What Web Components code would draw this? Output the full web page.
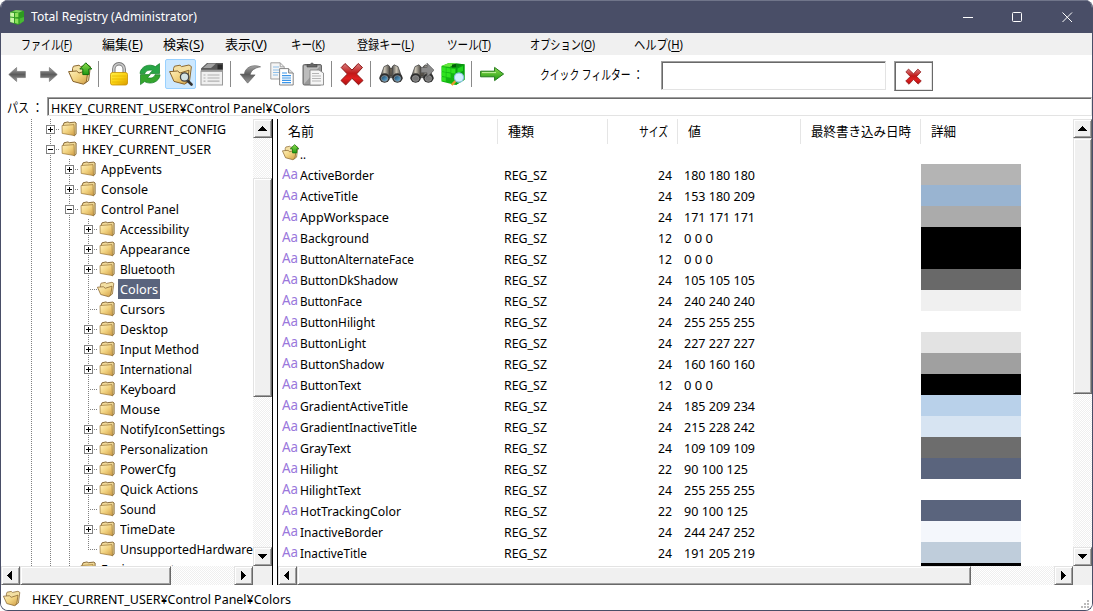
<!DOCTYPE html>
<html lang="ja">
<head>
<meta charset="utf-8">
<title>Total Registry (Administrator)</title>
<style>
  html, body { margin: 0; height: 100%; overflow: hidden; background: #fff; }
  body { font: 13px/20px "Noto Sans", "Noto Sans CJK JP", sans-serif; color: #000; }
</style>
</head>
<body>
<registry-app></registry-app>

<script>
// Icons, keyed by name: [viewBox size, markup]
const GRADS = `
  <defs>
    <linearGradient id="gray" x2="0" y2="1"><stop stop-color="#a5a5a5"/><stop offset=".5" stop-color="#5c5c5c"/><stop offset="1" stop-color="#9a9a9a"/></linearGradient>
    <linearGradient id="fold" x2="1" y2="1"><stop stop-color="#fff1bf"/><stop offset=".5" stop-color="#f1d27f"/><stop offset="1" stop-color="#cf9c45"/></linearGradient>
    <linearGradient id="green" x2="0" y2="1"><stop stop-color="#8fdc4e"/><stop offset="1" stop-color="#1f9a12"/></linearGradient>
    <linearGradient id="gold" x2="1" y2="1"><stop stop-color="#fff04a"/><stop offset=".5" stop-color="#fbd313"/><stop offset="1" stop-color="#d99a00"/></linearGradient>
    <linearGradient id="red" x2="0" y2="1"><stop stop-color="#d98080"/><stop offset=".45" stop-color="#c01818"/><stop offset=".7" stop-color="#e02020"/><stop offset="1" stop-color="#a80d0d"/></linearGradient>
    <linearGradient id="lens" x2="1" y2="1"><stop stop-color="#16405f"/><stop offset="1" stop-color="#6cb8e6"/></linearGradient>
    <linearGradient id="barrel" x2="1" y2="0"><stop stop-color="#3c3c3c"/><stop offset=".45" stop-color="#c9c3b4"/><stop offset="1" stop-color="#3a3733"/></linearGradient>
  </defs>`;
const OPEN_FOLDER = `
  <path d="M4.5 10V6.5l1-2.3 5.5-1 1.5 1.4 7.5-1.6 2.4 1.6-1.8 14-4 3z" fill="#f3dfa2" stroke="#8c6a34" stroke-width="1"/>
  <path d="M.6 9.6l8-.6 2.4 2 9-2.8-1.6 11.4-3 2.6L5 19.4z" fill="url(#fold)" stroke="#86622c" stroke-width="1" stroke-linejoin="round"/>`;
const X_MARK = `<path d="M5 1.5l7 6.6 6.2-6.6 4.3 4-6 6.5 6.5 6.5-4.5 4.2-6.5-6.4-6.3 6.7L1 18.5 7.4 12 1.2 5.6z" fill="url(#red)" stroke="#8e1515" stroke-width="1" stroke-linejoin="round"/>`;
const BINOCULARS = lens => `
  <path d="M9 6.5h6V14H9z" fill="#8d7f68" stroke="#3b342a" stroke-width=".7"/>
  <path d="M5 4.6l4-1.8 2 2.2.4 11L.8 16.5z" fill="url(#barrel)" stroke="#3a3a3a" stroke-width=".7"/>
  <path d="M19 4.6l-4-1.8L13 5l-.4 11 10.6.5z" fill="url(#barrel)" stroke="#3a3a3a" stroke-width=".7"/>
  <ellipse cx="5.6" cy="16" rx="5.2" ry="4.7" fill="#2e2e2e"/><ellipse cx="18.4" cy="16" rx="5.2" ry="4.7" fill="#2e2e2e"/>
  <ellipse cx="5.6" cy="16.5" rx="3.3" ry="2.9" fill="${lens}" stroke="#999" stroke-width=".7"/>
  <ellipse cx="18.4" cy="16.5" rx="3.3" ry="2.9" fill="${lens}" stroke="#999" stroke-width=".7"/>`;
const ICONS = {
  app: [16, `<path d="M1 3l6-2 8 1v10l-6 4-8-3z" fill="#2f9a22"/>
    <path d="M1.2 3.5L5 4v4L1.2 7.5zM1.2 8.5L5 9v5l-3.8-1z" fill="#c9f5a8"/>
    <path d="M6 4l3.6-.6V8L6 8.2zM6 9.4l3.6.4V15L6 14z" fill="#8be05a"/>
    <path d="M9.6 3.8L15 2.4v9.4L9.6 15.4z" fill="#2d9a20"/><path d="M10.6 9.4L15 8v4l-4.4 3z" fill="#48b934"/>
    <path d="M3 2.6L7 1l7 .8-4 1.6z" fill="#7fd060"/>`],
  back: [24, `<path d="M2 12l9-8v4.5h10v7H11V20z" fill="url(#gray)" stroke="#777" stroke-width=".8"/>`],
  forward: [24, `<path d="M22 12l-9-8v4.5H3v7h10V20z" fill="url(#gray)" stroke="#777" stroke-width=".8"/>`],
  up: [24, OPEN_FOLDER + `<path d="M17.8.8l6 6.2h-3v5.6h-6V7h-3z" fill="url(#green)" stroke="#0d6e0a" stroke-width="1"/>`],
  lock: [24, `<path d="M6.8 11V7a5.2 5.2 0 0 1 10.4 0v4" fill="none" stroke="#777" stroke-width="3.4"/>
    <path d="M6.8 11V7a5.2 5.2 0 0 1 10.4 0v4" fill="none" stroke="#ccc" stroke-width="1.6"/>
    <rect x="3.5" y="10.5" width="17" height="12.5" rx="2" fill="url(#gold)" stroke="#c79200" stroke-width=".8"/>
    <path d="M5 14h14M5 17h14M5 20h14" stroke="#e6b800" stroke-width=".8"/>`],
  refresh: [24, `<path d="M2 11.5C2.5 4.5 11 1 17.4 4.6L21.5 1.6v10H11.6l3-3C11.5 7.4 7.6 8.5 7 11.5z" fill="#28a545" stroke="#0f7c22" stroke-width=".7"/>
    <path d="M22 12.8C21.500 19.800 13 23.200 6.600 19.600L2.500 22.600v-10h9.900l-3 3c3.100 1.200 7 .1 7.600-2.900z" fill="#35a52d" stroke="#0f7c22" stroke-width=".7"/>`],
  search: [24, OPEN_FOLDER + `<path d="M18.500 18.500l4 4" stroke="#333" stroke-width="2.600" stroke-linecap="round"/>
    <circle cx="15.600" cy="15" r="4.200" fill="#cfe6f7" fill-opacity=".85" stroke="#444" stroke-width="1.300"/>`],
  history: [24, `<path d="M1 6.500L7 1h16v8H1z" fill="#5a5a5a"/><path d="M8 1.500h8L11 6H3z" fill="#a3a3a3"/><path d="M17.500 2.500h5v5h-5z" fill="#2c2c2c"/>
    <rect x="1" y="9" width="21.500" height="14" fill="#f0f0f0" stroke="#999"/>
    <path d="M1 8.800h22" stroke="#999" stroke-width="2"/>
    <path d="M3.500 13h2m2 0h12M3.500 16h2m2 0h12M3.500 19.200h2m2 0h12" stroke="#b0b0b0" stroke-width="1.200"/>`],
  undo: [24, `<path d="M22.500 4C15 .9 6.400 4 5.600 11.600H1.200L9 21l7.800-8.600h-5C12 8 16.500 5 22.500 4z" fill="url(#gray)" stroke="#666" stroke-width=".7"/>`],
  copy: [24, `<path d="M.8.8h9.400l4 4V17H.8z" fill="#f5f5f5" stroke="#999" stroke-width=".9"/><path d="M10.200.8v4h4" fill="none" stroke="#999" stroke-width=".9"/>
    <path d="M3 5h6M3 8h6M3 10.500h6M3 13h5" stroke="#8ec0ea" stroke-width="1.100"/>
    <path d="M9.600 6.600h9l4.600 4.400v12H9.600z" fill="#fff" stroke="#777" stroke-width=".9"/><path d="M18.600 6.600V11h4.600" fill="#ddd" stroke="#777" stroke-width=".9"/>
    <path d="M12 11h5M12 13.600h9M12 16h9M12 18.400h9M12 20.600h9" stroke="#3b95e8" stroke-width="1.200"/>`],
  paste: [24, `<rect x="2" y="2.500" width="18.500" height="20.500" rx="1.500" fill="#9a9a9a" stroke="#666"/>
    <path d="M3 4h16L3 22z" fill="#bcbcbc"/><path d="M6 5V2.500h3Q11-.6 13 2.500h3V5z" fill="#666" stroke="#444" stroke-width=".6"/>
    <path d="M9 8h9l4.500 3v12H9z" fill="#f6f6f6" stroke="#888" stroke-width=".9"/>
    <path d="M11 11.500h7M11 14h9M11 16.500h9M11 19h9" stroke="#b5b5b5"/>`],
  del: [24, X_MARK],
  find: [24, BINOCULARS('url(#lens)')],
  findNext: [24, BINOCULARS('#777') + `<path d="M11 5.400h6V1.200l7 7-7 7v-4.400h-6z" fill="#8b8b8b" stroke="#555" stroke-width=".7"/>`],
  cube: [24, `<path d="M.5 4L8 1l15.500 1.200v15.500L14.500 23 .5 19.500z" fill="#12b512"/>
    <path d="M.5 4L8 1l7 .6L9 5z" fill="#66e83e"/><path d="M9 5l6-3.400 8.500.6L15 6z" fill="#0a8f10"/>
    <path d="M15 6l8.500-3.800v15.500L15 23z" fill="#08a010"/><path d="M16.500 6.500L22 4v5l-5.500 2z" fill="#1fd51c"/><path d="M11 2.500l4-.6v3l-4 .6z" fill="#055c08"/>
    <path d="M.8 5l4 .6v4.300l-4-.6zM5.400 5.800l4.200.6v4.200l-4.200-.7zM.8 10l4 .6v4.200l-4-.8zM5.400 10.800l4.200.7v4.200l-4.200-.8zM.8 14.900l4 .7v4l-4-1zM10.200 6.600l4 .4v4.600l-4-.6z" fill="#2fe31f"/>
    <path d="M14.500 19l-3.800 4" stroke="#e89b30" stroke-width="2.400"/><circle cx="18" cy="15.500" r="4.600" fill="#d3efff" stroke="#86c3dc" stroke-width="1.100"/>`],
  go: [24, `<path d="M.6 9.200h14V5.400l9 6.600-9 6.600v-3.800H.6z" fill="url(#green)" stroke="#227a1a" stroke-width="1" stroke-linejoin="round"/><path d="M2 10.600h14" stroke="#c5f2a0" stroke-width="1"/>`],
  folder: [16, `<path d="M2 4.500l1-2.700 4-.9 1.200.8 5.600-.6 1.300.9V13l-1.600 1.800z" fill="#f0d998" stroke="#7d5f2e" stroke-width=".9" stroke-linejoin="round"/>
    <path d="M1 4.600l12-1 .5 11L1.200 12.400z" fill="url(#fold)" stroke="#9a7536" stroke-width=".7"/>`],
  open: [24, OPEN_FOLDER],
};
// the <defs> come along with each icon because ids resolve per shadow root
const icon = (name, size) => {
  const [box, body] = ICONS[name];
  return `<svg width="${size}" height="${size}" viewBox="0 0 ${box} ${box}">${GRADS}${body}</svg>`;
};

// Base class: shadow root filled from css() and html()
class UiElement extends HTMLElement {
  connectedCallback() {
    if (this.shadowRoot) return;
    this.attachShadow({ mode: 'open' });
    this.shadowRoot.innerHTML = `<style>${this.css()}</style>${this.html()}`;
    this.ready();
  }
  ready() {}
}

// <ui-text w="60"> — one line of text condensed or widened to w pixels
class UiText extends UiElement {
  css() {
    return `
      :host { display: inline-block; white-space: nowrap; }
      span { display: inline-block; transform-origin: 0 50%; }
    `;
  }
  html() { return '<span><slot></slot></span>'; }
  ready() {
    const w = Number(this.getAttribute('w'));
    const span = this.shadowRoot.querySelector('span');
    const natural = span.getBoundingClientRect().width;
    if (!w || !natural) return;
    this.style.width = w + 'px';
    span.style.transform = `scaleX(${w / natural})`;
  }
}
customElements.define('ui-text', UiText);

// Icon element
class UiIcon extends UiElement {
  css() { return ':host { display: block; flex: none; } svg { display: block; }'; }
  html() { return icon(this.getAttribute('name'), this.getAttribute('size') || 16); }
}
customElements.define('ui-icon', UiIcon);

// Classic scroll bar: before = hatch before the thumb, thumb = its length
class ClassicScroll extends UiElement {
  css() {
    return `
      :host {
        display: flex; flex-direction: column; width: 19px;
        background: repeating-conic-gradient(#efefef 0 25%, #fff 0 50%) 0 0 / 2px 2px;
      }
      :host([horizontal]) { flex-direction: row; width: auto; height: 19px; }
      div {
        box-sizing: border-box; flex: none; background: #f0f0f0;
        border: 1px solid; border-color: #e3e3e3 #696969 #696969 #e3e3e3;
        box-shadow: inset 1px 1px #fff, inset -1px -1px #a0a0a0;
      }
      .btn { width: 19px; height: 19px; display: flex; align-items: center; justify-content: center; }
      .gap { flex: none; background: none; border: 0; box-shadow: none; }
      .rest { flex: 1; background: none; border: 0; box-shadow: none; }
    `;
  }
  html() {
    const h = this.hasAttribute('horizontal');
    const side = h ? 'width' : 'height';
    const a = h ? 'M6 0v9L1 4.5z' : 'M0 7h9L4.5 2z';
    const b = h ? 'M2 0v9l5-4.5z' : 'M0 2h9L4.5 7z';
    const svg = d => `<svg width="9" height="9" shape-rendering="crispEdges"><path d="${d}"/></svg>`;
    return `
      <div class="btn">${svg(a)}</div>
      <div class="gap" style="${side}:${this.getAttribute('before') || 0}px"></div>
      <div style="${side}:${this.getAttribute('thumb')}px"></div>
      <div class="rest"></div>
      <div class="btn">${svg(b)}</div>
    `;
  }
}
customElements.define('classic-scroll', ClassicScroll);

class TitleBar extends UiElement {
  css() {
    return `
      :host {
        display: flex; align-items: center; height: 32px; padding: 0 19px 0 8px;
        background: #494e67; color: #fff; font-size: 12px; border-top: 1px solid #70758a;
      }
      ui-text { margin-left: 6px; flex: 1; }
      .controls { display: flex; gap: 39px; margin-left: auto; }
      svg { display: block; }
    `;
  }
  html() {
    return `
      <ui-icon name="app" size="16"></ui-icon>
      <ui-text w="166">Total Registry (Administrator)</ui-text>
      <div class="controls">
        <svg width="11" height="11" stroke="#fff" fill="none"><path d="M1 5.5h10"/></svg>
        <svg width="11" height="11" stroke="#fff" fill="none"><rect x=".5" y=".5" width="9" height="9" rx="1"/></svg>
        <svg width="11" height="11" stroke="#fff" fill="none"><path d="M.5.5l9.500 9.500M10 .5L.5 10"/></svg>
      </div>
    `;
  }
}
customElements.define('title-bar', TitleBar);

// [label, access key, gap before, width]
const MENUS = [
  ['ファイル', 'F', 20, 51], ['編集', 'E', 30, 41], ['検索', 'S', 20, 41], ['表示', 'V', 21, 42], ['キー', 'K', 24, 34],
  ['登録キー', 'L', 32, 57], ['ツール', 'T', 33, 44], ['オプション', 'O', 39, 65], ['ヘルプ', 'H', 39, 49],
];
class MenuBar extends UiElement {
  css() {
    return `
      :host { display: flex; align-items: center; height: 22px; background: #f0f0f0; line-height: 22px; }
      u { text-underline-offset: 2px; }
    `;
  }
  html() {
    return MENUS.map(([t, k, gap, w]) => `<ui-text w="${w}" style="margin-left:${gap}px">${t}(<u>${k}</u>)</ui-text>`).join('');
  }
}
customElements.define('menu-bar', MenuBar);

const TOOLS = ['back', 'forward', 'up', '|', 'lock', 'refresh', '*search', 'history', '|', 'undo', 'copy', 'paste',
  '|', 'del', '|', 'find', 'findNext', 'cube', '|', 'go'];
class ToolBar extends UiElement {
  css() {
    return `
      :host { display: flex; align-items: flex-start; height: 39px; padding: 4px 0 0 1px; box-sizing: border-box; }
      .tool { width: 31px; height: 30px; box-sizing: border-box; display: flex; align-items: center; justify-content: center; }
      .on { background: #cce8ff; border: 1px solid #99d1ff; border-radius: 2px; }
      i { width: 1px; height: 26px; margin: 2px 4px 0 3px; background: #8a8a8a; }
      ui-text { margin: 5px 0 0 33px; }
      .field {
        width: 225px; height: 29px; margin: 2px 0 0 18px; box-sizing: border-box;
        border: 1px solid; border-color: #a0a0a0 #e3e3e3 #e3e3e3 #a0a0a0; box-shadow: inset 1px 1px #696969;
      }
      .clear {
        width: 39px; height: 30px; margin: 2px 0 0 8px; box-sizing: border-box;
        display: flex; align-items: center; justify-content: center;
        border: 1px solid; border-color: #a0a0a0 #696969 #696969 #a0a0a0; box-shadow: inset 1px 1px #696969, inset -1px -1px #e3e3e3;
      }
    `;
  }
  html() {
    const small = { back: 21, forward: 21, undo: 23 };
    return TOOLS.map(t => {
      if (t === '|') return '<i></i>';
      const name = t.replace('*', '');
      return `<div class="tool ${t[0] === '*' ? 'on' : ''}"><ui-icon name="${name}" size="${small[name] || 24}"></ui-icon></div>`;
    }).join('') + `
      <ui-text w="103">クイック フィルター ：</ui-text>
      <div class="field"></div>
      <div class="clear"><ui-icon name="del" size="17"></ui-icon></div>
    `;
  }
}
customElements.define('tool-bar', ToolBar);

class PathBar extends UiElement {
  css() {
    return `
      :host { display: flex; height: 22px; padding-top: 3px; box-sizing: border-box; }
      .label { margin: 0 0 0 6px; }
      .box {
        flex: 1; height: 19px; margin-left: 4px; padding-left: 3px; box-sizing: border-box; line-height: 20px;
        border: 1px solid; border-color: #a0a0a0 #e3e3e3 #e3e3e3 #a0a0a0; box-shadow: inset 1px 1px #696969;
      }
    `;
  }
  html() {
    return '<ui-text class="label" w="36">パス ：</ui-text><div class="box"><slot></slot></div>';
  }
}
customElements.define('path-bar', PathBar);

// <tree-row depth state icon> — state: plus, minus or leaf; "last" ends its guide line
class TreeRow extends UiElement {
  css() {
    return `
      :host { display: flex; height: 20px; align-items: center; }
      b, .exp {
        flex: none; width: 19px; height: 20px;
        background: repeating-linear-gradient(#808080 0 1px, transparent 1px 2px) 9px 0 / 1px 100% no-repeat;
      }
      .exp {
        display: flex; align-items: center; justify-content: flex-end;
        background-image: repeating-linear-gradient(#808080 0 1px, transparent 1px 2px), repeating-linear-gradient(90deg, #808080 0 1px, transparent 1px 2px);
        background-position: 9px 0, 9px 10px; background-size: 1px 100%, 10px 1px;
      }
      :host([last]) .exp { background-size: 1px 11px, 10px 1px; }
      svg { display: block; flex: none; margin-right: 5px; }
      ui-icon { margin-left: 1px; }
      :host([selected]) ui-icon { margin: 0 0 0 -1px; }
      .label { margin-left: 3px; padding: 0 2px; height: 20px; line-height: 20px; }
      :host([selected]) .label { background: #5a647d; color: #fff; }
    `;
  }
  html() {
    const depth = Number(this.getAttribute('depth'));
    const state = this.getAttribute('state');
    const name = this.getAttribute('icon') || 'folder';
    const box = state === 'leaf' ? '' : `
      <svg width="9" height="9" shape-rendering="crispEdges">
        <path d="M.5.5h8v8h-8z" fill="#fff" stroke="#808080"/>
        <path d="M2 4.5h5${state === 'plus' ? 'M4.5 2v5' : ''}" stroke="#000"/>
      </svg>`;
    return `${'<b></b>'.repeat(depth)}<div class="exp">${box}</div>
      <ui-icon name="${name}" size="${name === 'open' ? 18 : 16}"></ui-icon>
      <div class="label"><slot></slot></div>`;
  }
}
customElements.define('tree-row', TreeRow);

// [depth, state, label, width, extra attributes]
const TREE = [
  [1, 'plus', 'HKEY_CURRENT_CONFIG', 144],
  [1, 'minus', 'HKEY_CURRENT_USER', 129],
  [2, 'plus', 'AppEvents', 61],
  [2, 'plus', 'Console', 47],
  [2, 'minus', 'Control Panel', 78],
  [3, 'plus', 'Accessibility', 69],
  [3, 'plus', 'Appearance', 70],
  [3, 'plus', 'Bluetooth', 55],
  [3, 'leaf', 'Colors', 38, 'selected icon="open"'],
  [3, 'leaf', 'Cursors', 45],
  [3, 'plus', 'Desktop', 48],
  [3, 'plus', 'Input Method', 79],
  [3, 'plus', 'International', 72],
  [3, 'leaf', 'Keyboard', 56],
  [3, 'leaf', 'Mouse', 40],
  [3, 'plus', 'NotifyIconSettings', 105],
  [3, 'plus', 'Personalization', 88],
  [3, 'plus', 'PowerCfg', 56],
  [3, 'plus', 'Quick Actions', 78],
  [3, 'leaf', 'Sound', 36],
  [3, 'plus', 'TimeDate', 55],
  [3, 'leaf', 'UnsupportedHardware', 133, 'last'],
  [2, 'leaf', 'Environment', 74],
];
class KeyTree extends UiElement {
  css() {
    return `
      :host { display: grid; grid-template: 447px 19px / 252px 19px; background: #fff; }
      .rows { overflow: hidden; padding-left: 21px; }
      .corner { background: #f0f0f0; }
    `;
  }
  html() {
    return `
      <div class="rows">${TREE.map(([d, s, t, w, extra = '']) =>
        `<tree-row depth="${d}" state="${s}" ${extra}><ui-text w="${w}">${t}</ui-text></tree-row>`).join('')}</div>
      <classic-scroll before="40" thumb="219"></classic-scroll>
      <classic-scroll horizontal thumb="151"></classic-scroll>
      <div class="corner"></div>
    `;
  }
}
customElements.define('key-tree', KeyTree);

// [name, name width, size, value]; the value is also the swatch colour
const VALUES = [
  ['ActiveBorder', 74, 24, '180 180 180'],
  ['ActiveTitle', 58, 24, '153 180 209'],
  ['AppWorkspace', 89, 24, '171 171 171'],
  ['Background', 69, 12, '0 0 0'],
  ['ButtonAlternateFace', 114, 12, '0 0 0'],
  ['ButtonDkShadow', 98, 24, '105 105 105'],
  ['ButtonFace', 62, 24, '240 240 240'],
  ['ButtonHilight', 75, 24, '255 255 255'],
  ['ButtonLight', 66, 24, '227 227 227'],
  ['ButtonShadow', 84, 24, '160 160 160'],
  ['ButtonText', 61, 12, '0 0 0'],
  ['GradientActiveTitle', 108, 24, '185 209 234'],
  ['GradientInactiveTitle', 117, 24, '215 228 242'],
  ['GrayText', 51, 24, '109 109 109'],
  ['Hilight', 38, 22, '90 100 125'],
  ['HilightText', 61, 24, '255 255 255'],
  ['HotTrackingColor', 101, 22, '90 100 125'],
  ['InactiveBorder', 83, 24, '244 247 252'],
  ['InactiveTitle', 67, 24, '191 205 219'],
];
const VALUE_WIDTHS = { 5: 29, 10: 64, 11: 71 };
class ValueList extends UiElement {
  css() {
    return `
      :host { display: grid; grid-template: 447px 19px / 795px 19px; background: #fff; }
      .body { overflow: hidden; }
      .head, .row { display: grid; grid-template-columns: 220px 110px 70px 123px 120px 100px; }
      .head { height: 24px; line-height: 25px; }
      .head div { box-sizing: border-box; padding: 0 9px 0 10px; border-right: 1px solid #e5e5e5; white-space: nowrap; }
      .head div:last-child { border: 0; }
      .row { height: 21px; line-height: 22px; }
      .name { display: flex; padding-left: 4px; }
      .aa { width: 18px; color: #9a78dc; font-size: 14px; line-height: 20px; }
      .cell { padding-left: 6px; }
      .num { text-align: right; padding-right: 6px; }
      .up { align-items: center; height: 19px; }
      .corner { background: #f0f0f0; }
    `;
  }
  html() {
    const rows = VALUES.map(([name, w, size, val]) => `
      <div class="row">
        <div class="name"><div class="aa"><ui-text w="16">Aa</ui-text></div><ui-text w="${w}">${name}</ui-text></div>
        <div class="cell"><ui-text w="43">REG_SZ</ui-text></div>
        <div class="num"><ui-text w="14">${size}</ui-text></div>
        <div class="cell"><ui-text w="${VALUE_WIDTHS[val.length]}">${val}</ui-text></div>
        <div></div>
        <div style="background:rgb(${val.split(' ').join(',')})"></div>
      </div>`).join('');
    return `
      <div class="body">
        <div class="head">
          <div><ui-text w="26">名前</ui-text></div><div><ui-text w="26">種類</ui-text></div>
          <div class="num" style="padding-right:9px"><ui-text w="29">サイズ</ui-text></div>
          <div><ui-text w="13">値</ui-text></div><div><ui-text w="100">最終書き込み日時</ui-text></div><div><ui-text w="25">詳細</ui-text></div>
        </div>
        <div class="name up"><ui-icon name="up" size="17"></ui-icon><ui-text w="6" style="margin:3px 0 0 1px">..</ui-text></div>
        <div style="height:2px"></div>
        ${rows}
        <div class="row"><div></div><div></div><div></div><div></div><div></div><div style="background:#000"></div></div>
      </div>
      <classic-scroll thumb="256"></classic-scroll>
      <classic-scroll horizontal thumb="674"></classic-scroll>
      <div class="corner"></div>
    `;
  }
}
customElements.define('value-list', ValueList);

class StatusBar extends UiElement {
  css() {
    return `
      :host { display: flex; align-items: center; flex: 1; padding: 2px 1px 0 2px; background: #fff; }
      .text { flex: 1; margin-left: 11px; }
      svg { align-self: flex-end; margin: 0 2px 2px 0; }
      ui-icon { margin-bottom: 2px; }
    `;
  }
  html() {
    const dots = [[6, 0], [3, 3], [6, 3], [0, 6], [3, 6], [6, 6]];
    return `<ui-icon name="open" size="18"></ui-icon><div class="text"><slot></slot></div>
      <svg width="8" height="8">${dots.map(([x, y]) => `<rect x="${x}" y="${y}" width="2" height="2" fill="#bbb"/>`).join('')}</svg>`;
  }
}
customElements.define('status-bar', StatusBar);

class RegistryApp extends UiElement {
  css() {
    return `
      :host {
        display: flex; flex-direction: column; box-sizing: border-box; width: 1093px; height: 611px;
        border: 1px solid #494e67; border-top: 0; border-radius: 8px; overflow: hidden; background: #fff;
      }
      .panes { display: flex; height: 466px; }
      .split { width: 6px; box-sizing: border-box; border: solid #000; border-width: 0 1px; background: #fff; }
    `;
  }
  html() {
    const path = '<ui-text w="259">HKEY_CURRENT_USER¥Control Panel¥Colors</ui-text>';
    return `
      <title-bar></title-bar>
      <menu-bar></menu-bar>
      <tool-bar></tool-bar>
      <path-bar>${path}</path-bar>
      <div style="height:3px"></div>
      <div class="panes">
        <key-tree></key-tree>
        <div class="split"></div>
        <value-list></value-list>
      </div>
      <status-bar>${path}</status-bar>
    `;
  }
}
customElements.define('registry-app', RegistryApp);
</script>
</body>
</html>
